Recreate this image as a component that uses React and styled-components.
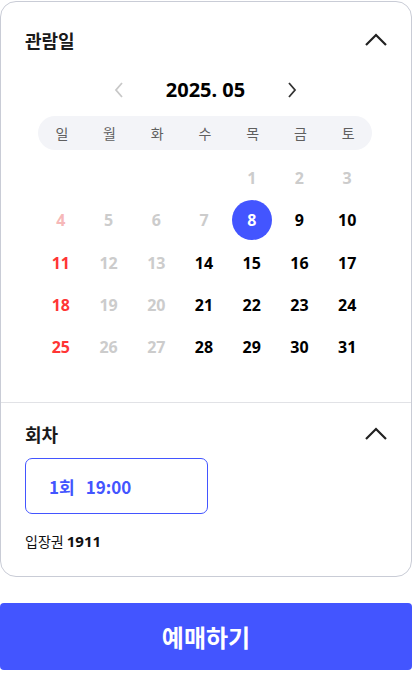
import React from "react";
import styled, { createGlobalStyle } from "styled-components";

const GlobalStyle = createGlobalStyle`
  body {
    margin: 0;
    padding: 0;
    background: #fff;
    font-family: "Noto Sans CJK KR", "Noto Sans", sans-serif;
    color: #111;
  }
`;

const Page = styled.div`
  width: 412px;
  padding-top: 1px;
`;

const Card = styled.div`
  border: 1px solid #c9ccd6;
  border-radius: 16px;
  background: #fff;
`;

const Section = styled.section`
  padding: ${(p) => p.$pad};
  border-top: ${(p) => (p.$divider ? "1px solid #e1e2e6" : "none")};
`;

const Header = styled.div`
  display: flex;
  align-items: center;
  justify-content: space-between;
  height: 24px;
`;

const Title = styled.h2`
  margin: 0;
  font-size: 18px;
  line-height: 24px;
  font-weight: 700;
  color: #1a1a1a;
`;

const Toggle = styled.button`
  display: flex;
  border: none;
  background: none;
  padding: 0;
  margin-right: -1px;
  cursor: pointer;
`;

const MonthNav = styled.div`
  display: flex;
  align-items: center;
  justify-content: center;
  gap: 35px;
  margin: 26px 0 0 -1px;
  height: 24px;
`;

const Arrow = styled.button`
  display: flex;
  align-items: center;
  justify-content: center;
  width: 24px;
  height: 24px;
  border: none;
  background: none;
  padding: 0;
  color: ${(p) => (p.$disabled ? "#c8c8c8" : "#333")};
`;

const Month = styled.div`
  font-size: 20px;
  line-height: 24px;
  font-weight: 700;
  color: #000;
  font-family: "Noto Sans", sans-serif;
`;

const Weekdays = styled.div`
  display: grid;
  grid-template-columns: repeat(7, 1fr);
  width: 334px;
  height: 34px;
  margin: 14px 0 0 13px;
  background: #f3f4f8;
  border-radius: 17px;
  align-items: center;
`;

const Weekday = styled.span`
  text-align: center;
  font-size: 14px;
  color: #5f5f5f;
`;

const Days = styled.div`
  display: grid;
  grid-template-columns: repeat(7, 1fr);
  grid-auto-rows: 42.25px;
  width: 334px;
  margin: 7px 0 0 12px;
`;

const Day = styled.div`
  display: flex;
  align-items: center;
  justify-content: center;
  font-family: "Noto Sans", sans-serif;
  font-size: 16px;
  font-weight: 700;
  color: ${(p) => p.$color};
`;

const Selected = styled.span`
  display: flex;
  align-items: center;
  justify-content: center;
  width: 40px;
  height: 40px;
  border-radius: 50%;
  background: #4355ff;
  color: #fff;
`;

const TimeBox = styled.button`
  display: flex;
  align-items: center;
  gap: 11px;
  width: 183px;
  height: 56px;
  margin-top: 12px;
  padding: 0 0 0 23px;
  border: 1px solid #4355ff;
  border-radius: 7px;
  background: #fff;
  color: #4355ff;
  font-family: "Noto Sans CJK KR", "Noto Sans", sans-serif;
  font-size: 17px;
  font-weight: 700;
  cursor: pointer;
`;

const Ticket = styled.p`
  margin: 18px 0 0;
  font-size: 14px;
  line-height: 18px;
  color: #111;

  b {
    font-family: "Noto Sans", sans-serif;
    font-size: 15px;
    font-weight: 700;
  }
`;

const BookButton = styled.button`
  display: block;
  width: 100%;
  height: 67px;
  margin-top: 26px;
  border: none;
  border-radius: 4px;
  background: #4355ff;
  color: #fff;
  font-family: "Noto Sans CJK KR", "Noto Sans", sans-serif;
  font-size: 24px;
  font-weight: 700;
  cursor: pointer;
`;

const ChevronUp = () => (
  <svg width="24" height="24" viewBox="0 0 24 24" fill="none" stroke="#222" strokeWidth="2.2">
    <polyline points="2,17 12,7 22,17" />
  </svg>
);

const Chevron = ({ left }) => (
  <svg width="10" height="16" viewBox="0 0 10 16" fill="none" stroke="currentColor" strokeWidth="1.8">
    <polyline points={left ? "8,1 2,8 8,15" : "2,1 8,8 2,15"} />
  </svg>
);

const weekdays = ["일", "월", "화", "수", "목", "금", "토"];
const today = 8;

function dayColor(d, col) {
  if (col === 0) return d < today ? "#f6b8b8" : "#ff3535";
  if (d < today || col === 1 || col === 2) return "#cccccc";
  return "#000";
}

const App = () => {
  const cells = [];
  for (let i = 0; i < 4; i++) cells.push(null);
  for (let d = 1; d <= 31; d++) cells.push(d);

  return (
    <Page>
      <GlobalStyle />
      <Card>
        <Section $pad="26px 24px 34px">
          <Header>
            <Title>관람일</Title>
            <Toggle aria-label="접기">
              <ChevronUp />
            </Toggle>
          </Header>
          <MonthNav>
            <Arrow $disabled aria-label="이전 달">
              <Chevron left />
            </Arrow>
            <Month>2025. 05</Month>
            <Arrow aria-label="다음 달">
              <Chevron />
            </Arrow>
          </MonthNav>
          <Weekdays>
            {weekdays.map((w) => (
              <Weekday key={w}>{w}</Weekday>
            ))}
          </Weekdays>
          <Days>
            {cells.map((d, i) =>
              d === null ? (
                <Day key={"e" + i} />
              ) : (
                <Day key={d} $color={dayColor(d, i % 7)}>
                  {d === today ? <Selected>{d}</Selected> : d}
                </Day>
              )
            )}
          </Days>
        </Section>
        <Section $divider $pad="19px 24px 26px">
          <Header>
            <Title>회차</Title>
            <Toggle aria-label="접기">
              <ChevronUp />
            </Toggle>
          </Header>
          <TimeBox>
            <span>1회</span>
            <span>19:00</span>
          </TimeBox>
          <Ticket>
            입장권 <b>1911</b>
          </Ticket>
        </Section>
      </Card>
      <BookButton>예매하기</BookButton>
    </Page>
  );
};

export default App;
